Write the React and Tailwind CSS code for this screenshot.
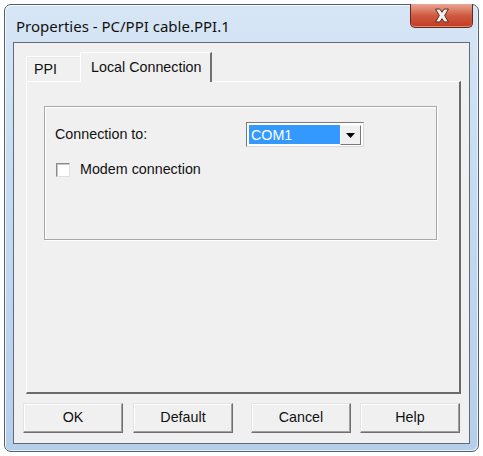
import React from "react";

function Btn({ children, className = "" }) {
  return (
    <div
      className={
        "h-[30px] w-[100px] flex items-center justify-center bg-[#f0f0f0] border border-t-[#e3e3e3] border-l-[#e3e3e3] border-r-[#6f6f6f] border-b-[#6f6f6f] shadow-[inset_-1px_-1px_0_#a0a0a0,inset_1px_1px_0_#ffffff] text-[14.3px] text-[#111] " +
        className
      }
    >
      {children}
    </div>
  );
}

export default function App() {
  return (
    <div
      className="w-[483px] h-[456px] bg-white p-[4px]"
      style={{ fontFamily: '"Liberation Sans", Arial, sans-serif' }}
    >
      <div className="w-[475px] h-[448px] rounded-[7px] border border-[#55606c] bg-gradient-to-b from-[#d7e6f5] via-[#c2d9f1] to-[#b5cfeb] flex flex-col px-[8px] pb-[7px] shadow-[inset_1px_1px_0_#f4f9ff,inset_-1px_-1px_0_#e6f0fa]">
        {/* title bar */}
        <div className="h-[37px] flex items-start relative shrink-0">
          <div
            className="pl-[3px] pt-[11px] text-[15px] text-[#111] leading-[20px]"
            style={{ fontFamily: '"Noto Sans", "Open Sans", sans-serif' }}
          >
            Properties - PC/PPI cable.PPI.1
          </div>
          <div className="absolute right-[-3px] top-[-1px] w-[63px] h-[24px] rounded-b-[5px] border border-[#5d2b22] border-t-0 bg-gradient-to-b from-[#e8a593] via-[#cf5a40] to-[#c23b22] flex items-center justify-center shadow-[inset_0_-1px_0_#e98a6c]">
            <svg width="18" height="15" viewBox="0 0 16 14">
              <path
                d="M2 1 L6 1 L8 4 L10 1 L14 1 L10.5 7 L14 13 L10 13 L8 10 L6 13 L2 13 L5.5 7 Z"
                fill="#f4f0ee"
                stroke="#5a2418"
                strokeWidth="0.9"
                strokeLinejoin="round"
              />
            </svg>
          </div>
        </div>

        {/* client area */}
        <div className="flex-1 border border-[#5f6b78] bg-[#f0f0f0] flex flex-col">
          {/* tabs */}
          <div className="h-[38px] flex items-end pl-[12px] shrink-0">
            <div className="h-[24px] w-[54px] border-t border-l border-[#ffffff] bg-[#f0f0f0] shadow-[inset_1px_1px_0_#e8e8e8] flex items-start pt-[2px] pl-[7px] text-[14.3px] text-[#111] mb-[1px]">
              PPI
            </div>
            <div className="h-[30px] w-[132px] border-t border-l border-white border-r-2 border-r-[#6f6f6f] bg-[#f0f0f0] flex items-start pt-[4px] pl-[10px] text-[14.3px] text-[#111] relative z-10 -mb-[1px]">
              Local Connection
            </div>
          </div>

          {/* tab panel */}
          <div className="ml-[12px] mr-[8px] h-[313px] border-t border-l border-white border-r-2 border-r-[#6a6a6a] border-b-2 border-b-[#6a6a6a] bg-[#f0f0f0] pt-[24px] pl-[17px] pr-[22px] shrink-0">
            <div className="h-[134px] border border-[#a8a8a8] shadow-[1px_1px_0_#ffffff,inset_1px_1px_0_#ffffff] pt-[15px] pl-[10px]">
              <div className="flex items-center h-[25px]">
                <div className="w-[191px] text-[14.3px] text-[#111]">Connection to:</div>
                <div className="w-[118px] h-[25px] border border-[#7a7a7a] border-r-[#d8d8d8] border-b-[#d8d8d8] bg-white flex p-[2px]">
                  <div className="flex-1 bg-[#3399ff] text-white text-[14.3px] leading-[20px] pl-[2px]">
                    COM1
                  </div>
                  <div className="w-[21px] h-[20px] bg-[#f0f0f0] border border-[#f8f8f8] border-r-[#777] border-b-[#777] flex items-center justify-center">
                    <svg width="9" height="5" viewBox="0 0 9 5">
                      <path d="M0 0 H9 L4.5 5 Z" fill="#000" />
                    </svg>
                  </div>
                </div>
              </div>
              <div className="flex items-center mt-[15px] h-[16px]">
                <div className="w-[14px] h-[14px] ml-[1px] border border-[#8a8a8a] border-r-[#e0e0e0] border-b-[#e0e0e0] bg-white shadow-[inset_1px_1px_0_#c8c8c8]" />
                <div className="ml-[10px] text-[14.3px] text-[#111]">Modem connection</div>
              </div>
            </div>
          </div>

          {/* buttons */}
          <div className="flex items-start mt-[9px] pl-[9px]">
            <Btn>OK</Btn>
            <Btn className="ml-[10px]">Default</Btn>
            <Btn className="ml-[18px]">Cancel</Btn>
            <Btn className="ml-[9px]">Help</Btn>
          </div>
        </div>
      </div>
    </div>
  );
}
